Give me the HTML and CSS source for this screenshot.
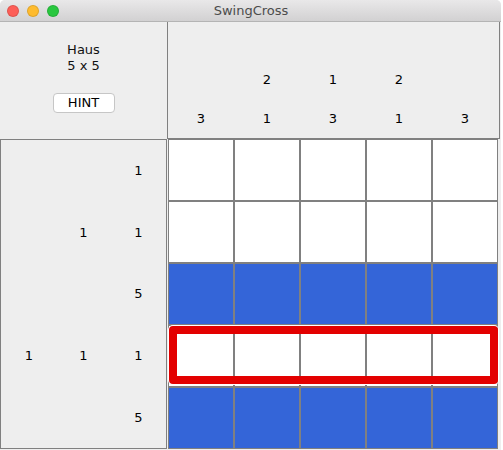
FILE: index.html
```html
<!DOCTYPE html>
<html>
<head>
<meta charset="utf-8">
<title>SwingCross</title>
<link rel="stylesheet" href="styles.css">
</head>
<body>
<div class="window">
  <div class="titlebar">
    <div class="lights">
      <span class="light red"></span>
      <span class="light yellow"></span>
      <span class="light green"></span>
    </div>
    <div class="title">SwingCross</div>
    <div class="spacer"></div>
  </div>
  <div class="main">
    <div class="info">
      <div class="name">Haus</div>
      <div class="size">5 x 5</div>
      <button class="hint">HINT</button>
    </div>
    <div class="colclues">
      <span></span><span></span><span></span><span></span><span></span>
      <span></span><span>2</span><span>1</span><span>2</span><span></span>
      <span>3</span><span>1</span><span>3</span><span>1</span><span>3</span>
    </div>
    <div class="rowclues">
      <span></span><span></span><span>1</span>
      <span></span><span>1</span><span>1</span>
      <span></span><span></span><span>5</span>
      <span>1</span><span>1</span><span>1</span>
      <span></span><span></span><span>5</span>
    </div>
    <div class="board">
      <div class="cell"></div><div class="cell"></div><div class="cell"></div><div class="cell"></div><div class="cell"></div>
      <div class="cell"></div><div class="cell"></div><div class="cell"></div><div class="cell"></div><div class="cell"></div>
      <div class="cell on"></div><div class="cell on"></div><div class="cell on"></div><div class="cell on"></div><div class="cell on"></div>
      <div class="cell"></div><div class="cell"></div><div class="cell"></div><div class="cell"></div><div class="cell"></div>
      <div class="cell on"></div><div class="cell on"></div><div class="cell on"></div><div class="cell on"></div><div class="cell on"></div>
      <div class="selection"></div>
    </div>
  </div>
</div>
</body>
</html>
```
FILE: styles.css
```css
html, body {
  margin: 0;
  padding: 0;
  background: #ffffff;
}
body {
  font-family: "DejaVu Sans", "Liberation Sans", sans-serif;
  font-size: 13px;
  color: #000;
}
.window {
  width: 501px;
  height: 450px;
  background: #eeeeee;
  border-radius: 5px 5px 0 0;
  overflow: hidden;
}
.titlebar {
  height: 21px;
  border-bottom: 1px solid #b4b4b4;
  background: linear-gradient(#e9e8e9, #d2d1d2);
  display: grid;
  grid-template-columns: 1fr auto 1fr;
  align-items: center;
}
.lights {
  display: flex;
  gap: 8px;
  padding-left: 7px;
}
.light {
  box-sizing: border-box;
  width: 12px;
  height: 12px;
  border-radius: 50%;
  border: 0.5px solid rgba(0,0,0,0.12);
}
.light.red { background: #fd5e57; }
.light.yellow { background: #febb2e; }
.light.green { background: #29c73f; }
.title {
  color: #4c4c4c;
  font-size: 13px;
  padding-left: 1px;
}
.main {
  display: grid;
  grid-template-columns: 167px 334px;
  grid-template-rows: 117px 311px;
}
.info {
  display: flex;
  flex-direction: column;
  align-items: center;
  padding-top: 20px;
  line-height: 16px;
  color: #111;
}
.hint {
  margin-top: 19px;
  width: 62px;
  height: 20px;
  background: #ffffff;
  border: 1px solid #c6c6c6;
  border-radius: 4px;
  font-family: inherit;
  font-size: 13px;
  color: #000;
  padding: 0;
  line-height: 18px;
}
.colclues {
  box-sizing: border-box;
  width: 333px;
  border-left: 1px solid #808080;
  border-right: 1px solid #808080;
  border-bottom: 1px solid #808080;
  display: grid;
  grid-template-columns: repeat(5, 66px);
  grid-template-rows: repeat(3, 1fr);
  align-items: center;
  justify-items: center;
}
.rowclues {
  box-sizing: border-box;
  width: 167px;
  height: 310px;
  border: 1px solid #808080;
  display: grid;
  grid-template-columns: repeat(3, 1fr);
  grid-template-rows: repeat(5, 1fr);
  align-items: center;
  justify-items: center;
}
.rowclues span:nth-child(3n+1) { padding-left: 1px; }
.board {
  position: relative;
  margin-left: 1px;
  display: grid;
  grid-template-columns: repeat(5, 66px);
  grid-template-rows: repeat(5, 62px);
  align-self: start;
  justify-self: start;
}
.cell {
  box-sizing: border-box;
  border: 1px solid #808080;
  background: #ffffff;
}
.cell.on {
  background: #3465d8;
}
.selection {
  position: absolute;
  left: 1px;
  top: 187px;
  width: 329px;
  height: 58px;
  box-sizing: border-box;
  border: 8px solid #e30000;
  border-radius: 4px;
  box-shadow: 0 0 0 1px #ffffff;
}
```
